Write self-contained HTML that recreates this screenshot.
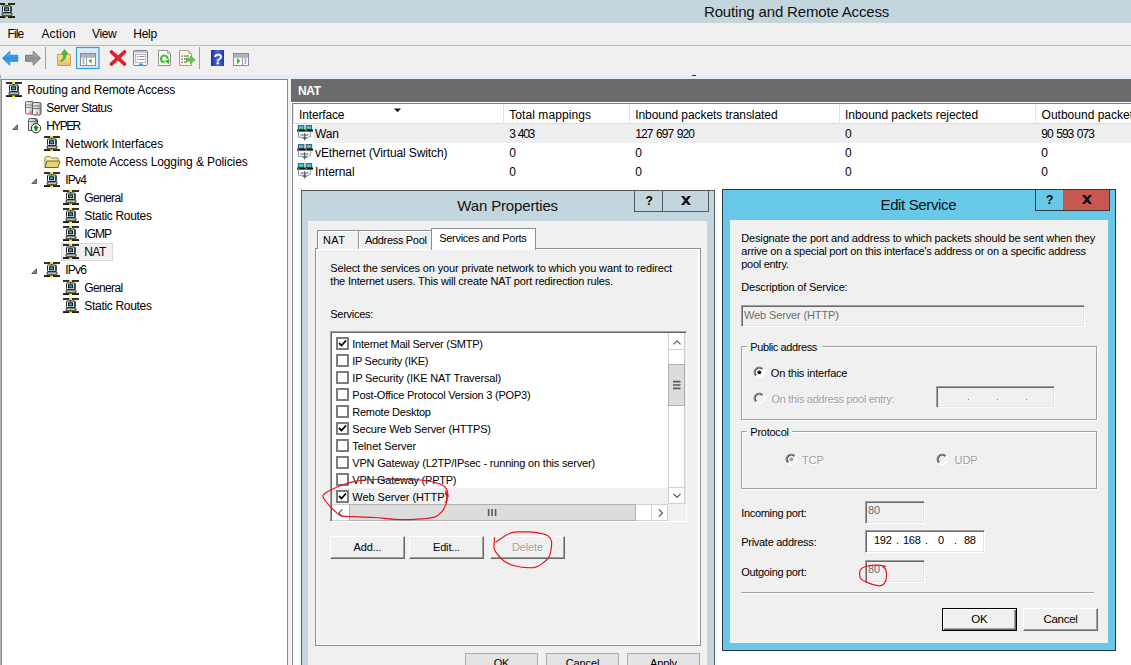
<!DOCTYPE html>
<html><head><meta charset="utf-8"><title>Routing and Remote Access</title>
<style>
*{box-sizing:border-box;margin:0;padding:0}
html,body{width:1131px;height:665px;overflow:hidden;background:#fff}
body{position:relative;font-family:"Liberation Sans",sans-serif;font-size:12px;color:#000}
.a{position:absolute;white-space:nowrap}
.s{font-family:"Liberation Sans",sans-serif;font-size:12px;line-height:14px;color:#000;letter-spacing:-0.12px}
.d{font-family:"Liberation Sans",sans-serif;font-size:11px;line-height:13px;color:#000;letter-spacing:-0.15px}
.dis{color:#6d6d6d}
.emb{color:#a0a0a0;text-shadow:1px 1px 0 #fff}
.btn{position:absolute;background:#f0f0f0;border-style:solid;border-width:1px;border-color:#fff #696969 #696969 #fff;text-align:center;font-size:11px;line-height:20px;letter-spacing:-0.15px;white-space:nowrap;box-shadow:inset -1px -1px 0 #a0a0a0}
.sunk{position:absolute;border-style:solid;border-width:1px;border-color:#a0a0a0 #fff #fff #a0a0a0;background:#f0f0f0;box-shadow:inset 1px 1px 0 #696969, inset -1px -1px 0 #e3e3e3}
.grp{position:absolute;border:1px solid #a0a0a0;box-shadow:1px 1px 0 #fff, inset 1px 1px 0 #fff}
.cb{position:absolute;width:13px;height:13px;border:2px solid #7c7c7c;background:#fff}
</style></head><body>
<div class="a" style="left:0px;top:0px;width:1131px;height:23px;background:#c4d6dd"></div>
<div class="a" style="left:704px;top:3px;letter-spacing:-0.167px;font-size:15px;line-height:18px;color:#111">Routing and Remote Access</div>
<div class="a" style="left:0px;top:23px;width:1131px;height:22px;background:#f0f0f0"></div>
<div class="a s" style="left:7.6px;top:27px;letter-spacing:-0.933px;">File</div>
<div class="a s" style="left:41.4px;top:27px;letter-spacing:0.2px;">Action</div>
<div class="a s" style="left:92px;top:27px;letter-spacing:-0.4px;">View</div>
<div class="a s" style="left:133.3px;top:27px;letter-spacing:-0.267px;">Help</div>
<div class="a" style="left:0px;top:45px;width:1131px;height:30px;background:#f0f0f0;border-top:1px solid #b9b9b9"></div>
<div class="a" style="left:0px;top:75px;width:1131px;height:4px;background:#e6ebf8"></div>
<div class="a" style="left:0px;top:75px;width:1px;height:590px;background:#b4b4b4"></div>
<div class="a" style="left:1px;top:79px;width:1130px;height:586px;background:#f0f0f0"></div>
<svg class="a" style="left:-1px;top:3px" width="16" height="16" viewBox="0 0 16 16"><rect x="0" y="0.200" width="16" height="1.600" fill="#000"/><rect x="0" y="13.200" width="16" height="1.700" fill="#000"/><rect x="6.200" y="0" width="2.800" height="2" fill="#f0f000"/><rect x="7" y="2" width="1.200" height="1" fill="#000"/><rect x="6.200" y="13.400" width="2.800" height="2" fill="#f0f000"/><rect x="7" y="12.300" width="1.200" height="1" fill="#000"/><rect x="3.500" y="3" width="8.500" height="6.500" rx="0.800" fill="#f4f4f4" stroke="#222" stroke-width="1"/><rect x="11.500" y="3.500" width="1" height="6" fill="#000"/><rect x="5.500" y="4.800" width="4.200" height="3" fill="#10b8b8" stroke="#000" stroke-width="0.900"/><path d="M3.300 10 L12.800 10 L13 12.300 L3 12.300 Z" fill="#e0e0e0" stroke="#222" stroke-width="0.900"/></svg>
<svg class="a" style="left:0;top:45px" width="260" height="30" viewBox="0 0 260 30">
<defs><linearGradient id="gb" x1="0" y1="0" x2="0" y2="1"><stop offset="0" stop-color="#6cc4f6"/><stop offset="0.5" stop-color="#2a8ee0"/><stop offset="1" stop-color="#5ab0f0"/></linearGradient>
<linearGradient id="gg" x1="0" y1="0" x2="0" y2="1"><stop offset="0" stop-color="#c4c4c4"/><stop offset="0.5" stop-color="#8c8c8c"/><stop offset="1" stop-color="#b4b4b4"/></linearGradient>
<linearGradient id="gh" x1="0" y1="0" x2="1" y2="0"><stop offset="0" stop-color="#1c2c9c"/><stop offset="0.5" stop-color="#4c6cd8"/><stop offset="1" stop-color="#2038a8"/></linearGradient>
<linearGradient id="gf" x1="0" y1="0" x2="0" y2="1"><stop offset="0" stop-color="#f8e098"/><stop offset="1" stop-color="#e8c068"/></linearGradient></defs>
<path d="M2.500 13.200 L9.800 6.300 L9.800 10.300 L17.800 10.300 L17.800 16.300 L9.800 16.300 L9.800 20.300 Z" fill="url(#gb)" stroke="#2f8fdc" stroke-width="1" stroke-linejoin="round"/>
<path d="M40.500 13.200 L33.200 6.300 L33.200 10.300 L25.500 10.300 L25.500 16.300 L33.200 16.300 L33.200 20.300 Z" fill="url(#gg)" stroke="#7a7a7a" stroke-width="1" stroke-linejoin="round"/>
<rect x="45" y="2" width="1" height="22" fill="#a0a0a0"/>
<path d="M57.500 9.500 L70.500 9.500 L70.500 20.500 L57.500 20.500 Z" fill="url(#gf)" stroke="#c8a050" stroke-width="1"/>
<path d="M60 16.500 C63 15 64 12 63.500 8.500 L61.500 8.500 L64.500 4.500 L68 8.500 L66 8.500 C66.500 13 64 16 60 16.500 Z" fill="#4cc040" stroke="#2c9828" stroke-width="0.600"/>
<rect x="76.500" y="2.500" width="22.500" height="21" fill="#dcebf8" stroke="#3a9ae4" stroke-width="1.200"/>
<rect x="80.500" y="8.500" width="15" height="12" fill="#fdfdfd" stroke="#8a8a92" stroke-width="1"/><rect x="81" y="9" width="14" height="2.500" fill="#b4b4bc"/><rect x="80.500" y="11.500" width="15" height="1" fill="#8a8a92"/><rect x="86" y="12" width="1" height="8" fill="#9a9aa2"/><rect x="82.500" y="13.500" width="2" height="1" fill="#4a7ac8"/><rect x="82.500" y="15.500" width="2" height="1" fill="#4a7ac8"/><rect x="82.500" y="17.500" width="2" height="1" fill="#4a7ac8"/><path d="M91.500 13.500 L88.500 16 L91.500 18.500 Z" fill="#40b030"/>
<path d="M111.500 7 L124.500 19 M124.500 7 L111.500 19" fill="none" stroke="#c00c18" stroke-width="3.600" stroke-linecap="round"/><path d="M111.500 7 L124.500 19 M124.500 7 L111.500 19" fill="none" stroke="#f01c28" stroke-width="2.400" stroke-linecap="round"/>
<rect x="133.500" y="5.500" width="14" height="15" rx="1" fill="#f6f6f8" stroke="#7c7c84"/><rect x="134" y="6" width="13" height="2" fill="#c8c8d0"/><rect x="135.500" y="9.500" width="10" height="8" fill="#fff" stroke="#a8a8b0" stroke-width="0.800"/><rect x="137" y="11" width="1.500" height="1" fill="#2ab0e8"/><rect x="139.500" y="11" width="5" height="1" fill="#8890a0"/><rect x="137" y="14" width="1.500" height="1" fill="#2ab0e8"/><rect x="139.500" y="14" width="5" height="1" fill="#8890a0"/><rect x="139" y="18.500" width="4" height="1.800" fill="#20b0e8"/>
<path d="M158.500 5.500 L167.500 5.500 L170.500 8.500 L170.500 20.500 L158.500 20.500 Z" fill="#fafafa" stroke="#909090"/><path d="M167.500 5.500 L167.500 8.500 L170.500 8.500" fill="none" stroke="#909090" stroke-width="0.800"/><circle cx="164.300" cy="13.800" r="3.300" fill="none" stroke="#40c030" stroke-width="2.200"/><rect x="164.500" y="14" width="5" height="4" fill="#fafafa"/><path d="M164.800 15.800 L169.600 14.200 L168.800 19.200 Z" fill="#30b028"/>
<path d="M179.500 5.500 L188.500 5.500 L191.500 8.500 L191.500 20.500 L179.500 20.500 Z" fill="#fcf6dc" stroke="#a0a0a0"/><path d="M188.500 5.500 L188.500 8.500 L191.500 8.500" fill="none" stroke="#a0a0a0" stroke-width="0.800"/><rect x="181.500" y="10.500" width="1.200" height="1.200" fill="#334"/><rect x="184" y="10.500" width="5" height="1" fill="#556"/><rect x="181.500" y="13.500" width="1.200" height="1.200" fill="#334"/><rect x="184" y="13.500" width="3" height="1" fill="#556"/><rect x="181.500" y="16.500" width="1.200" height="1.200" fill="#334"/><rect x="184" y="16.500" width="3" height="1" fill="#556"/><path d="M186.500 13.300 L190.500 13.300 L190.500 11 L195.300 14.800 L190.500 18.600 L190.500 16.300 L186.500 16.300 Z" fill="#58c848" stroke="#38a830" stroke-width="0.500"/>
<rect x="199" y="2" width="1" height="22" fill="#a0a0a0"/>
<rect x="211" y="5" width="13" height="16" fill="url(#gh)"/>
<text x="217.800" y="19" font-family="Liberation Sans, sans-serif" font-size="15" fill="#fff" stroke="#fff" stroke-width="0.400" text-anchor="middle">?</text>
<rect x="233.500" y="8.500" width="15" height="12" fill="#fdfdfd" stroke="#8a8a92" stroke-width="1"/><rect x="234" y="9" width="14" height="2.500" fill="#b4b4bc"/><rect x="233.500" y="11.500" width="15" height="1" fill="#8a8a92"/><rect x="242" y="12" width="1" height="8" fill="#9a9aa2"/><rect x="244.500" y="13.500" width="2" height="1" fill="#4a7ac8"/><rect x="244.500" y="15.500" width="2" height="1" fill="#4a7ac8"/><rect x="244.500" y="17.500" width="2" height="1" fill="#4a7ac8"/><path d="M237 13 L240.500 16 L237 19 Z" fill="#40b030"/>
</svg>
<div class="a" style="left:1px;top:79px;width:287px;height:590px;background:#fff;border:1px solid #828790"></div>
<svg class="a" style="left:6px;top:82px" width="16" height="16" viewBox="0 0 16 16"><rect x="0" y="0.200" width="16" height="1.600" fill="#000"/><rect x="0" y="13.200" width="16" height="1.700" fill="#000"/><rect x="6.200" y="0" width="2.800" height="2" fill="#f0f000"/><rect x="7" y="2" width="1.200" height="1" fill="#000"/><rect x="6.200" y="13.400" width="2.800" height="2" fill="#f0f000"/><rect x="7" y="12.300" width="1.200" height="1" fill="#000"/><rect x="3.500" y="3" width="8.500" height="6.500" rx="0.800" fill="#f4f4f4" stroke="#222" stroke-width="1"/><rect x="11.500" y="3.500" width="1" height="6" fill="#000"/><rect x="5.500" y="4.800" width="4.200" height="3" fill="#10b8b8" stroke="#000" stroke-width="0.900"/><path d="M3.300 10 L12.800 10 L13 12.300 L3 12.300 Z" fill="#e0e0e0" stroke="#222" stroke-width="0.900"/></svg>
<div class="a s" style="left:27.3px;top:83px;letter-spacing:-0.142px;">Routing and Remote Access</div>
<svg class="a" style="left:25px;top:100px" width="17" height="16" viewBox="0 0 17 16"><defs><linearGradient id="gs1" x1="0" y1="0" x2="1" y2="0"><stop offset="0" stop-color="#fafafa"/><stop offset="0.700" stop-color="#d0d0d0"/><stop offset="1" stop-color="#9c9c9c"/></linearGradient></defs><rect x="0.500" y="1.500" width="8" height="12.500" rx="1.500" fill="url(#gs1)" stroke="#666" stroke-width="1"/><rect x="7.500" y="2.500" width="8.500" height="12.500" rx="1.500" fill="url(#gs1)" stroke="#555" stroke-width="1"/><rect x="1" y="4.500" width="6.500" height="1" fill="#888"/><rect x="1" y="7" width="6.500" height="1" fill="#888"/><rect x="8" y="5.500" width="7.500" height="1" fill="#777"/><rect x="8" y="8" width="7.500" height="1" fill="#777"/><rect x="5" y="11.500" width="1.300" height="1.300" fill="#e82020"/><rect x="11.500" y="12.500" width="1.300" height="1.300" fill="#e82020"/></svg>
<div class="a s" style="left:46.3px;top:101px;letter-spacing:-0.542px;">Server Status</div>
<svg class="a" style="left:12px;top:124px" width="6" height="6" viewBox="0 0 6 6"><path d="M5.500 0.800 L5.500 5.500 L0.800 5.500 Z" fill="#8c8c8c" stroke="#404040" stroke-width="0.8"/></svg>
<svg class="a" style="left:25px;top:117px" width="18" height="18" viewBox="0 0 18 18"><defs><linearGradient id="gt2" x1="0" y1="0" x2="1" y2="0"><stop offset="0" stop-color="#f4f4f4"/><stop offset="1" stop-color="#a8a8a8"/></linearGradient></defs><path d="M3.500 3 Q3.500 1.500 5.500 1.500 L10 1.500 Q12.500 1.500 12.500 3.500 L12.500 13.500 L3.500 13.500 Z" fill="url(#gt2)" stroke="#555" stroke-width="1"/><rect x="4" y="4" width="8" height="1" fill="#777"/><path d="M9 1.800 L12.300 3.500 L12.300 5 Z" fill="#333"/><circle cx="11" cy="11.200" r="4.600" fill="#fff" stroke="#222" stroke-width="1"/><path d="M11 8 L14 11 L12.500 11 L12.500 13.800 L9.500 13.800 L9.500 11 L8 11 Z" fill="#108810"/></svg>
<div class="a s" style="left:46.3px;top:119px;letter-spacing:-1.6px;">HYPER</div>
<svg class="a" style="left:44px;top:136px" width="16" height="16" viewBox="0 0 16 16"><rect x="0" y="0.200" width="16" height="1.600" fill="#000"/><rect x="0" y="13.200" width="16" height="1.700" fill="#000"/><rect x="6.200" y="0" width="2.800" height="2" fill="#f0f000"/><rect x="7" y="2" width="1.200" height="1" fill="#000"/><rect x="6.200" y="13.400" width="2.800" height="2" fill="#f0f000"/><rect x="7" y="12.300" width="1.200" height="1" fill="#000"/><rect x="3.500" y="3" width="8.500" height="6.500" rx="0.800" fill="#f4f4f4" stroke="#222" stroke-width="1"/><rect x="11.500" y="3.500" width="1" height="6" fill="#000"/><rect x="5.500" y="4.800" width="4.200" height="3" fill="#10b8b8" stroke="#000" stroke-width="0.900"/><path d="M3.300 10 L12.800 10 L13 12.300 L3 12.300 Z" fill="#e0e0e0" stroke="#222" stroke-width="0.900"/></svg>
<div class="a s" style="left:65.3px;top:137px;letter-spacing:-0.129px;">Network Interfaces</div>
<svg class="a" style="left:44px;top:154px" width="17" height="16" viewBox="0 0 17 16"><path d="M1 4 Q1 2.500 2.500 2.500 L6 2.500 L7.500 4 L14 4 L14 13.500 L1 13.500 Z" fill="#f4ecb0" stroke="#8a7a30" stroke-width="0.9"/><path d="M3 7 L16 7 L14 13.500 L1 13.500 Z" fill="#e8d860" stroke="#6a5a20" stroke-width="0.9"/></svg>
<div class="a s" style="left:65.3px;top:155px;letter-spacing:-0.097px;">Remote Access Logging &amp; Policies</div>
<svg class="a" style="left:31px;top:178px" width="6" height="6" viewBox="0 0 6 6"><path d="M5.500 0.800 L5.500 5.500 L0.800 5.500 Z" fill="#8c8c8c" stroke="#404040" stroke-width="0.8"/></svg>
<svg class="a" style="left:44px;top:172px" width="16" height="16" viewBox="0 0 16 16"><rect x="0" y="0.200" width="16" height="1.600" fill="#000"/><rect x="0" y="13.200" width="16" height="1.700" fill="#000"/><rect x="6.200" y="0" width="2.800" height="2" fill="#f0f000"/><rect x="7" y="2" width="1.200" height="1" fill="#000"/><rect x="6.200" y="13.400" width="2.800" height="2" fill="#f0f000"/><rect x="7" y="12.300" width="1.200" height="1" fill="#000"/><rect x="3.500" y="3" width="8.500" height="6.500" rx="0.800" fill="#f4f4f4" stroke="#222" stroke-width="1"/><rect x="11.500" y="3.500" width="1" height="6" fill="#000"/><rect x="5.500" y="4.800" width="4.200" height="3" fill="#10b8b8" stroke="#000" stroke-width="0.900"/><path d="M3.300 10 L12.800 10 L13 12.300 L3 12.300 Z" fill="#e0e0e0" stroke="#222" stroke-width="0.900"/></svg>
<div class="a s" style="left:65.3px;top:173px;letter-spacing:-0.767px;">IPv4</div>
<svg class="a" style="left:63px;top:190px" width="16" height="16" viewBox="0 0 16 16"><rect x="0" y="0.200" width="16" height="1.600" fill="#000"/><rect x="0" y="13.200" width="16" height="1.700" fill="#000"/><rect x="6.200" y="0" width="2.800" height="2" fill="#f0f000"/><rect x="7" y="2" width="1.200" height="1" fill="#000"/><rect x="6.200" y="13.400" width="2.800" height="2" fill="#f0f000"/><rect x="7" y="12.300" width="1.200" height="1" fill="#000"/><rect x="3.500" y="3" width="8.500" height="6.500" rx="0.800" fill="#f4f4f4" stroke="#222" stroke-width="1"/><rect x="11.500" y="3.500" width="1" height="6" fill="#000"/><rect x="5.500" y="4.800" width="4.200" height="3" fill="#10b8b8" stroke="#000" stroke-width="0.900"/><path d="M3.300 10 L12.800 10 L13 12.300 L3 12.300 Z" fill="#e0e0e0" stroke="#222" stroke-width="0.900"/></svg>
<div class="a s" style="left:84.3px;top:191px;letter-spacing:-0.633px;">General</div>
<svg class="a" style="left:63px;top:208px" width="16" height="16" viewBox="0 0 16 16"><rect x="0" y="0.200" width="16" height="1.600" fill="#000"/><rect x="0" y="13.200" width="16" height="1.700" fill="#000"/><rect x="6.200" y="0" width="2.800" height="2" fill="#f0f000"/><rect x="7" y="2" width="1.200" height="1" fill="#000"/><rect x="6.200" y="13.400" width="2.800" height="2" fill="#f0f000"/><rect x="7" y="12.300" width="1.200" height="1" fill="#000"/><rect x="3.500" y="3" width="8.500" height="6.500" rx="0.800" fill="#f4f4f4" stroke="#222" stroke-width="1"/><rect x="11.500" y="3.500" width="1" height="6" fill="#000"/><rect x="5.500" y="4.800" width="4.200" height="3" fill="#10b8b8" stroke="#000" stroke-width="0.900"/><path d="M3.300 10 L12.800 10 L13 12.300 L3 12.300 Z" fill="#e0e0e0" stroke="#222" stroke-width="0.900"/></svg>
<div class="a s" style="left:84.3px;top:209px;letter-spacing:-0.308px;">Static Routes</div>
<svg class="a" style="left:63px;top:226px" width="16" height="16" viewBox="0 0 16 16"><rect x="0" y="0.200" width="16" height="1.600" fill="#000"/><rect x="0" y="13.200" width="16" height="1.700" fill="#000"/><rect x="6.200" y="0" width="2.800" height="2" fill="#f0f000"/><rect x="7" y="2" width="1.200" height="1" fill="#000"/><rect x="6.200" y="13.400" width="2.800" height="2" fill="#f0f000"/><rect x="7" y="12.300" width="1.200" height="1" fill="#000"/><rect x="3.500" y="3" width="8.500" height="6.500" rx="0.800" fill="#f4f4f4" stroke="#222" stroke-width="1"/><rect x="11.500" y="3.500" width="1" height="6" fill="#000"/><rect x="5.500" y="4.800" width="4.200" height="3" fill="#10b8b8" stroke="#000" stroke-width="0.900"/><path d="M3.300 10 L12.800 10 L13 12.300 L3 12.300 Z" fill="#e0e0e0" stroke="#222" stroke-width="0.900"/></svg>
<div class="a s" style="left:84.3px;top:227px;letter-spacing:-1.0px;">IGMP</div>
<div class="a" style="left:61px;top:243px;width:52px;height:18px;background:#f0f0f0;border:1px solid #dadada"></div>
<svg class="a" style="left:63px;top:244px" width="16" height="16" viewBox="0 0 16 16"><rect x="0" y="0.200" width="16" height="1.600" fill="#000"/><rect x="0" y="13.200" width="16" height="1.700" fill="#000"/><rect x="6.200" y="0" width="2.800" height="2" fill="#f0f000"/><rect x="7" y="2" width="1.200" height="1" fill="#000"/><rect x="6.200" y="13.400" width="2.800" height="2" fill="#f0f000"/><rect x="7" y="12.300" width="1.200" height="1" fill="#000"/><rect x="3.500" y="3" width="8.500" height="6.500" rx="0.800" fill="#f4f4f4" stroke="#222" stroke-width="1"/><rect x="11.500" y="3.500" width="1" height="6" fill="#000"/><rect x="5.500" y="4.800" width="4.200" height="3" fill="#10b8b8" stroke="#000" stroke-width="0.900"/><path d="M3.300 10 L12.800 10 L13 12.300 L3 12.300 Z" fill="#e0e0e0" stroke="#222" stroke-width="0.900"/></svg>
<div class="a s" style="left:84.3px;top:245px;letter-spacing:-0.6px;">NAT</div>
<svg class="a" style="left:31px;top:268px" width="6" height="6" viewBox="0 0 6 6"><path d="M5.500 0.800 L5.500 5.500 L0.800 5.500 Z" fill="#8c8c8c" stroke="#404040" stroke-width="0.8"/></svg>
<svg class="a" style="left:44px;top:262px" width="16" height="16" viewBox="0 0 16 16"><rect x="0" y="0.200" width="16" height="1.600" fill="#000"/><rect x="0" y="13.200" width="16" height="1.700" fill="#000"/><rect x="6.200" y="0" width="2.800" height="2" fill="#f0f000"/><rect x="7" y="2" width="1.200" height="1" fill="#000"/><rect x="6.200" y="13.400" width="2.800" height="2" fill="#f0f000"/><rect x="7" y="12.300" width="1.200" height="1" fill="#000"/><rect x="3.500" y="3" width="8.500" height="6.500" rx="0.800" fill="#f4f4f4" stroke="#222" stroke-width="1"/><rect x="11.500" y="3.500" width="1" height="6" fill="#000"/><rect x="5.500" y="4.800" width="4.200" height="3" fill="#10b8b8" stroke="#000" stroke-width="0.900"/><path d="M3.300 10 L12.800 10 L13 12.300 L3 12.300 Z" fill="#e0e0e0" stroke="#222" stroke-width="0.900"/></svg>
<div class="a s" style="left:65.3px;top:263px;letter-spacing:-0.767px;">IPv6</div>
<svg class="a" style="left:63px;top:280px" width="16" height="16" viewBox="0 0 16 16"><rect x="0" y="0.200" width="16" height="1.600" fill="#000"/><rect x="0" y="13.200" width="16" height="1.700" fill="#000"/><rect x="6.200" y="0" width="2.800" height="2" fill="#f0f000"/><rect x="7" y="2" width="1.200" height="1" fill="#000"/><rect x="6.200" y="13.400" width="2.800" height="2" fill="#f0f000"/><rect x="7" y="12.300" width="1.200" height="1" fill="#000"/><rect x="3.500" y="3" width="8.500" height="6.500" rx="0.800" fill="#f4f4f4" stroke="#222" stroke-width="1"/><rect x="11.500" y="3.500" width="1" height="6" fill="#000"/><rect x="5.500" y="4.800" width="4.200" height="3" fill="#10b8b8" stroke="#000" stroke-width="0.900"/><path d="M3.300 10 L12.800 10 L13 12.300 L3 12.300 Z" fill="#e0e0e0" stroke="#222" stroke-width="0.900"/></svg>
<div class="a s" style="left:84.3px;top:281px;letter-spacing:-0.633px;">General</div>
<svg class="a" style="left:63px;top:298px" width="16" height="16" viewBox="0 0 16 16"><rect x="0" y="0.200" width="16" height="1.600" fill="#000"/><rect x="0" y="13.200" width="16" height="1.700" fill="#000"/><rect x="6.200" y="0" width="2.800" height="2" fill="#f0f000"/><rect x="7" y="2" width="1.200" height="1" fill="#000"/><rect x="6.200" y="13.400" width="2.800" height="2" fill="#f0f000"/><rect x="7" y="12.300" width="1.200" height="1" fill="#000"/><rect x="3.500" y="3" width="8.500" height="6.500" rx="0.800" fill="#f4f4f4" stroke="#222" stroke-width="1"/><rect x="11.500" y="3.500" width="1" height="6" fill="#000"/><rect x="5.500" y="4.800" width="4.200" height="3" fill="#10b8b8" stroke="#000" stroke-width="0.900"/><path d="M3.300 10 L12.800 10 L13 12.300 L3 12.300 Z" fill="#e0e0e0" stroke="#222" stroke-width="0.900"/></svg>
<div class="a s" style="left:84.3px;top:299px;letter-spacing:-0.308px;">Static Routes</div>
<div class="a" style="left:291px;top:79px;width:850px;height:590px;background:#fff"></div>
<div class="a" style="left:292px;top:103px;width:1px;height:570px;background:#828790"></div>
<div class="a" style="left:291px;top:79px;width:840px;height:23px;background:#6b6b6b"></div>
<div class="a s" style="left:298px;top:84px;color:#fff;font-weight:bold;letter-spacing:-0.3px">NAT</div>
<div class="a" style="left:292px;top:102px;width:839px;height:2px;background:#fff;border-bottom:1px solid #7a7a7a"></div>
<div class="a" style="left:692px;top:75px;width:4px;height:1px;background:#333"></div>
<div class="a" style="left:293px;top:104px;width:838px;height:20px;background:#fff;border-bottom:1px solid #dcdde0;border-left:1px solid #e8e8ea"></div>
<div class="a s" style="left:299px;top:108px;letter-spacing:-0.15px;">Interface</div>
<div class="a s" style="left:509.2px;top:108px;letter-spacing:0.077px;">Total mappings</div>
<div class="a s" style="left:635.2px;top:108px;letter-spacing:-0.068px;">Inbound packets translated</div>
<div class="a s" style="left:845px;top:108px;letter-spacing:-0.043px;">Inbound packets rejected</div>
<div class="a s" style="left:1041.6px;top:108px;letter-spacing:0.0px;">Outbound packets translated</div>
<div class="a" style="left:503px;top:104px;width:1px;height:20px;background:#e2e3e5"></div>
<div class="a" style="left:629px;top:104px;width:1px;height:20px;background:#e2e3e5"></div>
<div class="a" style="left:839px;top:104px;width:1px;height:20px;background:#e2e3e5"></div>
<div class="a" style="left:1035px;top:104px;width:1px;height:20px;background:#e2e3e5"></div>
<svg class="a" style="left:394px;top:108px" width="7" height="5" viewBox="0 0 7 5"><path d="M0 0.500 L7 0.500 L3.500 4.200 Z" fill="#111"/></svg>
<div class="a" style="left:313px;top:124px;width:818px;height:19px;background:#efefef"></div>
<svg class="a" style="left:297px;top:125px" width="16" height="17" viewBox="0 0 16 17"><rect x="1.400" y="0.600" width="5.400" height="3.800" fill="#30d4ec" stroke="#505a64" stroke-width="1.100"/><rect x="9.200" y="0.600" width="5.400" height="3.800" fill="#30d4ec" stroke="#505a64" stroke-width="1.100"/><rect x="0" y="4.600" width="16" height="2" fill="#0a0a0a"/><rect x="0.800" y="5" width="1.500" height="1" fill="#28d828"/><rect x="8.600" y="5" width="1.500" height="1" fill="#28d828"/><path d="M1.500 7 L1.500 12.300 L11.500 12.300 L14 11 L12.800 9.800 L14 8.600 L13.200 7" fill="#fff" stroke="#7888a0" stroke-width="0.900"/><path d="M3.500 10 L11.500 10 M7.700 8.200 L7.700 15.500 M5.500 13.300 L10 13.300" fill="none" stroke="#38404c" stroke-width="0.900"/></svg>
<div class="a s" style="left:315px;top:127px;letter-spacing:-0.15px;">Wan</div>
<div class="a s" style="left:509.2px;top:127px;letter-spacing:-1.3px;word-spacing:1.2px;">3 403</div>
<div class="a s" style="left:635.2px;top:127px;letter-spacing:-0.94px;word-spacing:1.2px;">127 697 920</div>
<div class="a s" style="left:845px;top:127px;letter-spacing:0px;word-spacing:1.2px;">0</div>
<div class="a s" style="left:1041.3px;top:127px;letter-spacing:-0.989px;word-spacing:1.2px;">90 593 073</div>
<svg class="a" style="left:297px;top:144px" width="16" height="17" viewBox="0 0 16 17"><rect x="1.400" y="0.600" width="5.400" height="3.800" fill="#30d4ec" stroke="#505a64" stroke-width="1.100"/><rect x="9.200" y="0.600" width="5.400" height="3.800" fill="#30d4ec" stroke="#505a64" stroke-width="1.100"/><rect x="0" y="4.600" width="16" height="2" fill="#0a0a0a"/><rect x="0.800" y="5" width="1.500" height="1" fill="#28d828"/><rect x="8.600" y="5" width="1.500" height="1" fill="#28d828"/><path d="M1.500 7 L1.500 12.300 L11.500 12.300 L14 11 L12.800 9.800 L14 8.600 L13.200 7" fill="#fff" stroke="#7888a0" stroke-width="0.900"/><path d="M3.500 10 L11.500 10 M7.700 8.200 L7.700 15.500 M5.500 13.300 L10 13.300" fill="none" stroke="#38404c" stroke-width="0.900"/></svg>
<div class="a s" style="left:315px;top:146px;letter-spacing:-0.104px;">vEthernet (Virtual Switch)</div>
<div class="a s" style="left:509.2px;top:146px;letter-spacing:0px;word-spacing:1.2px;">0</div>
<div class="a s" style="left:635.2px;top:146px;letter-spacing:0px;word-spacing:1.2px;">0</div>
<div class="a s" style="left:845px;top:146px;letter-spacing:0px;word-spacing:1.2px;">0</div>
<div class="a s" style="left:1041.3px;top:146px;letter-spacing:0px;word-spacing:1.2px;">0</div>
<svg class="a" style="left:297px;top:163px" width="16" height="17" viewBox="0 0 16 17"><rect x="1.400" y="0.600" width="5.400" height="3.800" fill="#30d4ec" stroke="#505a64" stroke-width="1.100"/><rect x="9.200" y="0.600" width="5.400" height="3.800" fill="#30d4ec" stroke="#505a64" stroke-width="1.100"/><rect x="0" y="4.600" width="16" height="2" fill="#0a0a0a"/><rect x="0.800" y="5" width="1.500" height="1" fill="#28d828"/><rect x="8.600" y="5" width="1.500" height="1" fill="#28d828"/><path d="M1.500 7 L1.500 12.300 L11.500 12.300 L14 11 L12.800 9.800 L14 8.600 L13.200 7" fill="#fff" stroke="#7888a0" stroke-width="0.900"/><path d="M3.500 10 L11.500 10 M7.700 8.200 L7.700 15.500 M5.500 13.300 L10 13.300" fill="none" stroke="#38404c" stroke-width="0.900"/></svg>
<div class="a s" style="left:315px;top:165px;letter-spacing:-0.057px;">Internal</div>
<div class="a s" style="left:509.2px;top:165px;letter-spacing:0px;word-spacing:1.2px;">0</div>
<div class="a s" style="left:635.2px;top:165px;letter-spacing:0px;word-spacing:1.2px;">0</div>
<div class="a s" style="left:845px;top:165px;letter-spacing:0px;word-spacing:1.2px;">0</div>
<div class="a s" style="left:1041.3px;top:165px;letter-spacing:0px;word-spacing:1.2px;">0</div>
<div class="a" style="left:301px;top:190px;width:414px;height:490px;background:#c4d6dd;border:1px solid #4f5b60"></div>
<div class="a" style="left:308px;top:220.5px;width:399px;height:460px;background:#f0f0f0"></div>
<div class="a" style="left:457.3px;top:196.5px;letter-spacing:-0.154px;font-size:15px;line-height:18px;color:#111">Wan Properties</div>
<div class="a" style="left:634px;top:190px;width:29px;height:22px;border:1px solid #4f5b60"></div>
<div class="a" style="left:662px;top:190px;width:47px;height:22px;border:1px solid #4f5b60"></div>
<div class="a" style="left:645.5px;top:194px;font-weight:bold;font-size:12px;line-height:14px">?</div>
<svg class="a" style="left:681px;top:196px" width="10" height="9" viewBox="0 0 10 9"><path d="M0 0 L3 0 L5 2.500 L7 0 L10 0 L6.500 4.500 L10 9 L7 9 L5 6.500 L3 9 L0 9 L3.500 4.500 Z" fill="#111"/></svg>
<div class="a" style="left:315px;top:248px;width:386px;height:398px;background:#f0f0f0;border:1px solid #8a8e96;box-shadow:inset 1px 1px 0 #fff, inset -2px -1px 0 #fff"></div>
<div class="a" style="left:317px;top:230px;width:42px;height:19px;background:#f0f0f0;border:1px solid #8a8e96;border-bottom:none;box-shadow:inset 1px 1px 0 #fff"></div>
<div class="a" style="left:358px;top:230px;width:74px;height:19px;background:#f0f0f0;border:1px solid #8a8e96;border-bottom:none;box-shadow:inset 1px 1px 0 #fff"></div>
<div class="a" style="left:431px;top:228px;width:105px;height:22px;background:#fff;border:1px solid #8a8e96;border-bottom:none"></div>
<div class="a d" style="left:323px;top:234px;letter-spacing:0.4px;">NAT</div>
<div class="a d" style="left:364.9px;top:234px;letter-spacing:-0.309px;">Address Pool</div>
<div class="a d" style="left:439.2px;top:232px;letter-spacing:-0.276px;">Services and Ports</div>
<div class="a d" style="left:330.3px;top:262px;letter-spacing:-0.143px;">Select the services on your private network to which you want to redirect</div>
<div class="a d" style="left:330.3px;top:275px;letter-spacing:-0.19px;">the Internet users. This will create NAT port redirection rules.</div>
<div class="a d" style="left:330.2px;top:308px;letter-spacing:-0.25px;">Services:</div>
<div class="sunk" style="left:330px;top:331px;width:357px;height:191px;background:#fff"></div>
<div class="cb" style="left:336px;top:337px"><svg style="position:absolute;left:0;top:0" width="9" height="9" viewBox="0 0 9 9"><path d="M1 4 L3.500 6.500 L8 1.500" fill="none" stroke="#000" stroke-width="1.800"/></svg></div>
<div class="a d" style="left:352.3px;top:338px;letter-spacing:-0.242px;">Internet Mail Server (SMTP)</div>
<div class="cb" style="left:336px;top:354px"></div>
<div class="a d" style="left:352.3px;top:355px;letter-spacing:-0.312px;">IP Security (IKE)</div>
<div class="cb" style="left:336px;top:371px"></div>
<div class="a d" style="left:352.3px;top:372px;letter-spacing:-0.15px;">IP Security (IKE NAT Traversal)</div>
<div class="cb" style="left:336px;top:388px"></div>
<div class="a d" style="left:352.3px;top:389px;letter-spacing:-0.222px;">Post-Office Protocol Version 3 (POP3)</div>
<div class="cb" style="left:336px;top:405px"></div>
<div class="a d" style="left:352.3px;top:406px;letter-spacing:-0.254px;">Remote Desktop</div>
<div class="cb" style="left:336px;top:422px"><svg style="position:absolute;left:0;top:0" width="9" height="9" viewBox="0 0 9 9"><path d="M1 4 L3.500 6.500 L8 1.500" fill="none" stroke="#000" stroke-width="1.800"/></svg></div>
<div class="a d" style="left:352.3px;top:423px;letter-spacing:-0.146px;">Secure Web Server (HTTPS)</div>
<div class="cb" style="left:336px;top:439px"></div>
<div class="a d" style="left:352.3px;top:440px;letter-spacing:-0.083px;">Telnet Server</div>
<div class="cb" style="left:336px;top:456px"></div>
<div class="a d" style="left:352.3px;top:457px;letter-spacing:-0.188px;">VPN Gateway (L2TP/IPsec - running on this server)</div>
<div class="cb" style="left:336px;top:473px"></div>
<div class="a d" style="left:352.3px;top:474px;letter-spacing:-0.235px;">VPN Gateway (PPTP)</div>
<div class="a" style="left:332px;top:488px;width:336px;height:16px;background:#f0f0f0"></div>
<div class="cb" style="left:336px;top:490px"><svg style="position:absolute;left:0;top:0" width="9" height="9" viewBox="0 0 9 9"><path d="M1 4 L3.500 6.500 L8 1.500" fill="none" stroke="#000" stroke-width="1.800"/></svg></div>
<div class="a d" style="left:352.3px;top:491px;letter-spacing:-0.075px;">Web Server (HTTP)</div>
<div class="a" style="left:668px;top:333px;width:17px;height:171px;background:#fff;border-left:1px solid #d0d0d0;border-right:1px solid #d0d0d0"></div>
<div class="a" style="left:668px;top:349px;width:17px;height:1px;background:#d0d0d0"></div>
<div class="a" style="left:668px;top:364px;width:17px;height:42px;background:#dcdcdc;border:1px solid #b0b0b0"></div>
<div class="a" style="left:668px;top:487px;width:17px;height:17px;background:#fff;border:1px solid #d0d0d0"></div>
<svg class="a" style="left:672.500px;top:339.500px" width="8" height="5.300" viewBox="0 0 9 6"><path d="M0.500 5 L4.500 1 L8.500 5" fill="none" stroke="#555" stroke-width="1.300"/></svg>
<svg class="a" style="left:672.500px;top:493px" width="8" height="5.300" viewBox="0 0 9 6"><path d="M0.500 1 L4.500 5 L8.500 1" fill="none" stroke="#555" stroke-width="1.300"/></svg>
<svg class="a" style="left:673px;top:379px" width="8" height="12" viewBox="0 0 8 12"><path d="M0 2.600 H7.500 M0 6 H7.500 M0 9.400 H7.500" stroke="#5a5a5a" stroke-width="1.600"/></svg>
<div class="a" style="left:332px;top:504px;width:336px;height:17px;background:#fff;border-top:1px solid #d0d0d0;border-bottom:1px solid #d0d0d0"></div>
<div class="a" style="left:349px;top:504px;width:287px;height:17px;background:#dcdcdc;border:1px solid #b0b0b0"></div>
<div class="a" style="left:651px;top:504px;width:17px;height:17px;background:#fff;border:1px solid #d0d0d0"></div>
<div class="a" style="left:668px;top:504px;width:18px;height:17px;background:#f0f0f0"></div>
<svg class="a" style="left:337.500px;top:508.500px" width="5.300" height="8" viewBox="0 0 6 9"><path d="M5 0.500 L1 4.500 L5 8.500" fill="none" stroke="#555" stroke-width="1.300"/></svg>
<svg class="a" style="left:657.500px;top:508.500px" width="5.300" height="8" viewBox="0 0 6 9"><path d="M1 0.500 L5 4.500 L1 8.500" fill="none" stroke="#555" stroke-width="1.300"/></svg>
<svg class="a" style="left:486px;top:509px" width="12" height="8" viewBox="0 0 12 8"><path d="M2.600 0 V7 M6.100 0 V7 M9.600 0 V7" stroke="#5a5a5a" stroke-width="1.600"/></svg>
<div class="btn" style="left:330px;top:536px;width:75px;height:23px">Add...</div>
<div class="btn" style="left:409px;top:536px;width:75px;height:23px">Edit...</div>
<div class="btn emb" style="left:490px;top:536px;width:75px;height:23px">Delete</div>
<div class="btn" style="left:465px;top:653px;width:73px;height:22px;border:1px solid #acacac;background:#e3e3e3;box-shadow:none;line-height:19px">OK</div>
<div class="btn" style="left:546px;top:653px;width:73px;height:22px;border:1px solid #acacac;background:#e3e3e3;box-shadow:none;line-height:19px">Cancel</div>
<div class="btn" style="left:627px;top:653px;width:73px;height:22px;border:1px solid #acacac;background:#e3e3e3;box-shadow:none;line-height:19px">Apply</div>
<div class="a" style="left:722px;top:189px;width:394px;height:462px;background:#68c8e8;border:1px solid #2f3a40"></div>
<div class="a" style="left:730px;top:220px;width:378px;height:423px;background:#f0f0f0"></div>
<div class="a" style="left:880.5px;top:196px;letter-spacing:-0.364px;font-size:15px;line-height:18px;color:#111">Edit Service</div>
<div class="a" style="left:1035px;top:189px;width:29px;height:22px;border:1px solid #2f3a40"></div>
<div class="a" style="left:1063px;top:190px;width:47px;height:21px;background:#c75850;border-bottom:1px solid #4a3030;border-right:1px solid #4a3030"></div>
<div class="a" style="left:1046px;top:193px;font-weight:bold;font-size:12px;line-height:14px">?</div>
<svg class="a" style="left:1082px;top:195px" width="10" height="9" viewBox="0 0 10 9"><path d="M0 0 L3 0 L5 2.500 L7 0 L10 0 L6.500 4.500 L10 9 L7 9 L5 6.500 L3 9 L0 9 L3.500 4.500 Z" fill="#111"/></svg>
<div class="a d" style="left:741.3px;top:232px;letter-spacing:-0.166px;">Designate the port and address to which packets should be sent when they</div>
<div class="a d" style="left:741.3px;top:245px;letter-spacing:-0.213px;">arrive on a special port on this interface&#x27;s address or on a specific address</div>
<div class="a d" style="left:741.3px;top:258px;letter-spacing:-0.3px;">pool entry.</div>
<div class="a d" style="left:741.3px;top:281px;letter-spacing:-0.168px;">Description of Service:</div>
<div class="sunk" style="left:741px;top:305px;width:344px;height:22px;"></div>
<div class="a d dis" style="left:744px;top:309px;letter-spacing:-0.131px;">Web Server (HTTP)</div>
<div class="grp" style="left:741px;top:346px;width:356px;height:74px;"></div>
<div class="a" style="left:747px;top:340px;width:75px;height:13px;background:#f0f0f0"></div>
<div class="a d" style="left:750.3px;top:341px;letter-spacing:-0.4px;">Public address</div>
<svg class="a" style="left:753px;top:366px" width="13" height="13" viewBox="0 0 13 13"><circle cx="6.300" cy="6.300" r="5.200" fill="#fff" stroke="#fff" stroke-width="1.200"/><path d="M2.600 10 A5.200 5.200 0 0 1 10 2.600" fill="none" stroke="#808080" stroke-width="1.200"/><path d="M3.400 9.200 A4.100 4.100 0 0 1 9.200 3.400" fill="none" stroke="#404040" stroke-width="1.100"/><circle cx="6.300" cy="6.300" r="1.900" fill="#000"/></svg>
<div class="a d" style="left:770.8px;top:367px;letter-spacing:-0.213px;">On this interface</div>
<svg class="a" style="left:753px;top:392px" width="13" height="13" viewBox="0 0 13 13"><circle cx="6.300" cy="6.300" r="5.200" fill="#f0f0f0" stroke="#fff" stroke-width="1.200"/><path d="M2.600 10 A5.200 5.200 0 0 1 10 2.600" fill="none" stroke="#808080" stroke-width="1.200"/><path d="M3.400 9.200 A4.100 4.100 0 0 1 9.200 3.400" fill="none" stroke="#404040" stroke-width="1.100"/></svg>
<div class="a d emb" style="left:771.5px;top:393px;letter-spacing:-0.319px;">On this address pool entry:</div>
<div class="sunk" style="left:936px;top:386px;width:119px;height:22px;"></div>
<div class="a" style="left:968px;top:399px;width:1px;height:1px;background:#888"></div>
<div class="a" style="left:997px;top:399px;width:1px;height:1px;background:#888"></div>
<div class="a" style="left:1026px;top:399px;width:1px;height:1px;background:#888"></div>
<div class="grp" style="left:741px;top:431px;width:356px;height:58px;"></div>
<div class="a" style="left:747px;top:425px;width:45px;height:13px;background:#f0f0f0"></div>
<div class="a d" style="left:750.3px;top:426px;letter-spacing:-0.243px;">Protocol</div>
<svg class="a" style="left:785px;top:453px" width="13" height="13" viewBox="0 0 13 13"><circle cx="6.300" cy="6.300" r="5.200" fill="#f0f0f0" stroke="#fff" stroke-width="1.200"/><path d="M2.600 10 A5.200 5.200 0 0 1 10 2.600" fill="none" stroke="#808080" stroke-width="1.200"/><path d="M3.400 9.200 A4.100 4.100 0 0 1 9.200 3.400" fill="none" stroke="#404040" stroke-width="1.100"/><circle cx="6.300" cy="6.300" r="1.900" fill="#a0a0a0"/></svg>
<div class="a d emb" style="left:802px;top:454px;letter-spacing:-0.05px;">TCP</div>
<svg class="a" style="left:936px;top:453px" width="13" height="13" viewBox="0 0 13 13"><circle cx="6.300" cy="6.300" r="5.200" fill="#f0f0f0" stroke="#fff" stroke-width="1.200"/><path d="M2.600 10 A5.200 5.200 0 0 1 10 2.600" fill="none" stroke="#808080" stroke-width="1.200"/><path d="M3.400 9.200 A4.100 4.100 0 0 1 9.200 3.400" fill="none" stroke="#404040" stroke-width="1.100"/></svg>
<div class="a d emb" style="left:954.6px;top:454px;letter-spacing:-0.15px;">UDP</div>
<div class="a d" style="left:741.2px;top:507px;letter-spacing:-0.323px;">Incoming port:</div>
<div class="sunk" style="left:865px;top:501px;width:60px;height:23px;"></div>
<div class="a d dis" style="left:868px;top:504px;">80</div>
<div class="a d" style="left:741.2px;top:536px;letter-spacing:-0.28px;">Private address:</div>
<div class="sunk" style="left:865px;top:530px;width:120px;height:23px;background:#fff"></div>
<div class="a d" style="left:874px;top:534px;letter-spacing:-0.3px">192</div>
<div class="a d" style="left:896px;top:534px;letter-spacing:-0.3px">.</div>
<div class="a d" style="left:903px;top:534px;letter-spacing:-0.3px">168</div>
<div class="a d" style="left:925px;top:534px;letter-spacing:-0.3px">.</div>
<div class="a d" style="left:938px;top:534px;letter-spacing:-0.3px">0</div>
<div class="a d" style="left:954px;top:534px;letter-spacing:-0.3px">.</div>
<div class="a d" style="left:964px;top:534px;letter-spacing:-0.3px">88</div>
<div class="a d" style="left:741.2px;top:566px;letter-spacing:-0.323px;">Outgoing port:</div>
<div class="sunk" style="left:865px;top:560px;width:60px;height:23px;"></div>
<div class="a d dis" style="left:868px;top:563px;">80</div>
<div class="a" style="left:741px;top:592px;width:353px;height:2px;border-top:1px solid #a0a0a0;border-bottom:1px solid #fff"></div>
<div class="btn" style="left:942px;top:608px;width:75px;height:23px;border:1px solid #000;box-shadow:inset 1px 1px 0 #fff, inset -1px -1px 0 #696969, inset -2px -2px 0 #a0a0a0;line-height:21px;font-size:11.500px">OK</div>
<div class="btn" style="left:1023px;top:608px;width:75px;height:23px;line-height:21px;font-size:11.500px;letter-spacing:-0.3px">Cancel</div>
<svg class="a" style="left:0;top:0" width="1131" height="665" viewBox="0 0 1131 665" fill="none" stroke="#ea1420" stroke-width="1.200" stroke-linecap="round">
<path d="M448.3 496.5 C448.0 495.2 447.7 490.7 446.3 488.6 C444.9 486.5 443.9 485.3 439.7 483.9 C435.5 482.5 428.6 480.8 421.1 480 C413.6 479.2 402.3 479.4 394.6 479.3 C386.9 479.2 381.3 479.2 374.7 479.5 C368.1 479.8 360.3 480.3 354.8 481.3 C349.3 482.3 345.9 483.7 341.5 485.3 C337.1 486.9 331.4 489.6 328.3 491.2 C325.2 492.8 323.9 493.9 323.2 495.2 C322.5 496.5 323.2 497.4 324.3 499.2 C325.4 501.0 327.6 503.6 329.6 505.8 C331.6 508.0 334.2 510.7 336.2 512.4 C338.2 514.1 338.4 515.1 341.5 515.8 C344.6 516.5 349.3 516.4 354.8 516.7 C360.3 517.0 368.1 517.1 374.7 517.5 C381.3 517.9 388.0 519.0 394.6 519.3 C401.2 519.6 407.9 519.7 414.5 519.3 C421.1 518.9 429.8 518.5 434.4 517.1 C439.0 515.7 440.3 513.4 442.3 511.1 C444.3 508.8 445.5 505.9 446.3 503.2 C447.1 500.5 447.1 497.2 447 495.2 C446.9 493.2 445.8 491.9 445.6 491.2"/>
<path d="M494.6 537.7 C494.5 539.5 493.6 545.5 494.1 548.3 C494.6 551.1 495.9 552.3 497.7 554.5 C499.5 556.7 501.9 559.7 504.8 561.6 C507.8 563.5 511.6 565.0 515.4 566 C519.2 567.0 524.2 567.6 527.7 567.7 C531.2 567.9 533.9 567.8 536.6 566.9 C539.3 566.0 541.6 564.0 543.7 562.4 C545.8 560.8 547.8 559.5 549 557.1 C550.2 554.8 550.8 550.9 551.2 548.3 C551.6 545.6 551.9 543.3 551.4 541.2 C550.9 539.1 550.0 537.2 548.1 535.9 C546.2 534.6 543.2 534.0 540.1 533.3 C537.0 532.6 532.9 532.1 529.5 531.9 C526.1 531.7 522.6 531.8 519.8 531.9 C517.0 532.0 515.2 531.7 512.7 532.4 C510.2 533.1 507.6 534.3 504.8 535.9 C502.0 537.5 497.4 541.1 495.9 542.1"/>
<path d="M885.7 566.4 C884.4 566.2 880.8 565.3 878 565.2 C875.2 565.1 871.9 565.0 869 565.7 C866.1 566.4 862.2 567.3 860.7 569.3 C859.2 571.3 859.3 575.8 860.3 577.9 C861.2 580.0 863.5 580.8 866.4 582.1 C869.3 583.4 875.0 585.3 877.9 585.7 C880.8 586.1 882.2 585.6 883.6 584.3 C885.0 583.0 886.0 580.4 886.4 577.9 C886.8 575.4 886.3 571.1 885.7 569.3 C885.1 567.5 883.4 567.5 882.9 567.1"/>
</svg>
</body></html>
